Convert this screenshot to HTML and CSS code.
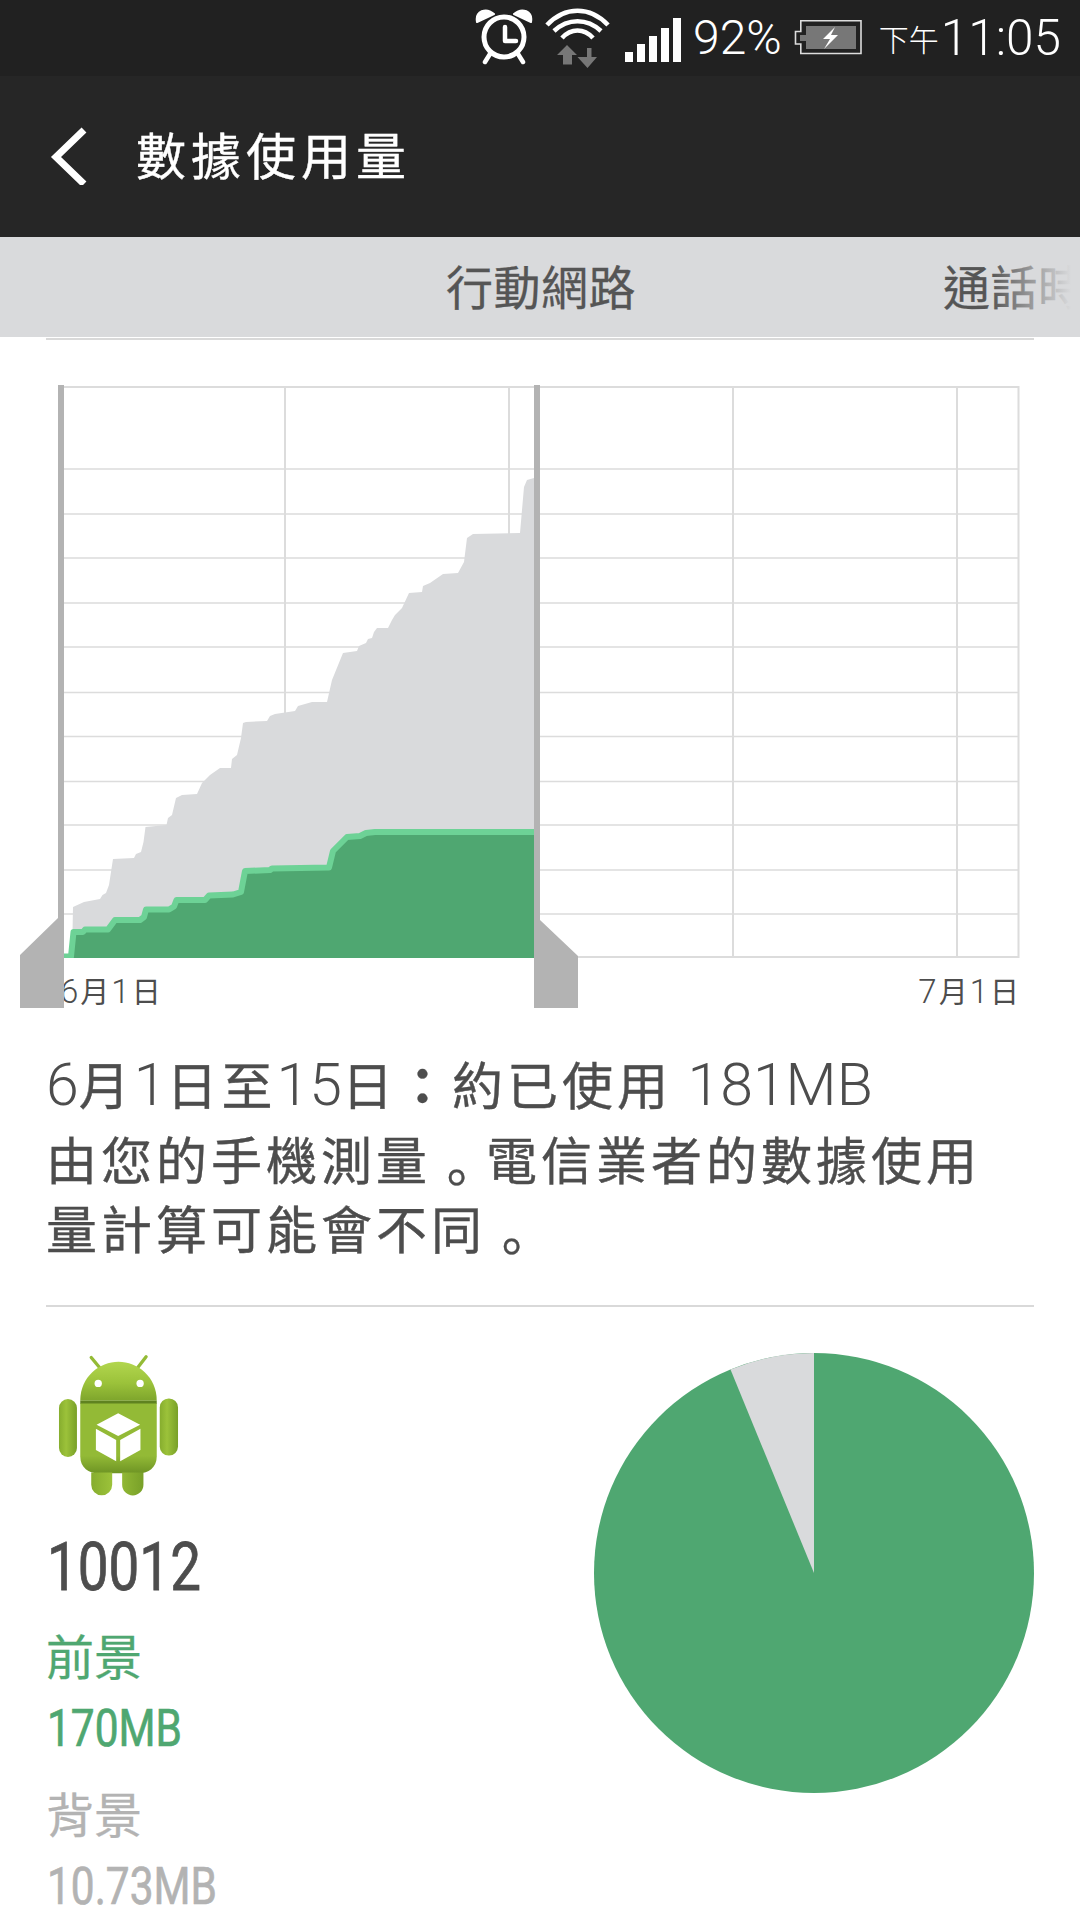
FILE: index.html
```html
<!DOCTYPE html>
<html lang="zh-Hant">
<head>
<meta charset="utf-8">
<title>數據使用量</title>
<link rel="stylesheet" href="styles.css">
</head>
<body>
<div class="status">
  <svg class="st-icons" viewBox="470 0 220 76">
    <g fill="none" stroke="#fff" stroke-width="5">
      <circle cx="504" cy="37" r="20"/>
      <path d="M505 27V41H516" stroke-width="4.500" stroke-linecap="round" stroke-linejoin="round"/>
      <path d="M490 54L485 62M518 54L523 62" stroke-width="4.500" stroke-linecap="round"/>
    </g>
    <path d="M477 22C475 11 486 7 494 14Z M531 22C533 11 522 7 514 14Z" fill="#fff" stroke="#fff" stroke-width="2" stroke-linejoin="round"/>
    <g fill="none" stroke="#fff" stroke-width="4.600">
      <path d="M547 25C565 6 590 6 608 25"/>
      <path d="M554 31C568 18 587 18 601 31"/>
      <path d="M562 38C571 28 584 28 593 38"/>
    </g>
    <path d="M567 45L557 55H563V64.500H572V55H577Z M587 48V57H577.500L587.500 68L597 57H591.500V48Z" fill="#777"/>
    <g fill="#fff">
      <rect x="625" y="52" width="8" height="10"/>
      <rect x="637" y="44" width="8" height="18"/>
      <rect x="649" y="36" width="8" height="26"/>
      <rect x="661" y="28" width="8" height="34"/>
      <rect x="673" y="18" width="8" height="44"/>
    </g>
  </svg>
  <span class="st-pct">92%</span>
  <svg class="st-batt" viewBox="790 0 80 76">
    <path d="M802.800 20.800H863V53.500H802.800V44H797.500V31.500H802.800Z" fill="none" stroke="#ddd" stroke-width="1.600"/>
    <path d="M808 26H858V49H808V41H802V35H808Z" fill="#777"/>
    <path d="M837 27L825 39H832L826 49L840 35H833Z" fill="#fff"/>
  </svg>
  <span class="st-ampm">下午</span>
  <span class="st-time">11:05</span>
</div>

<header class="appbar">
  <svg class="back" viewBox="0 0 44 64">
    <path d="M38 9L10 36L38 63" fill="none" stroke="#fff" stroke-width="7"/>
  </svg>
  <h1 class="title">數據使用量</h1>
</header>

<nav class="tabs">
  <span class="tab">行動網路</span>
  <span class="tab">通話時間</span>
  <span class="tab-fade"></span>
</nav>
<div class="rule rule-top"></div>

<section class="chart">
  <svg class="chart-art" viewBox="0 340 1080 680">
    <defs>
      <clipPath id="plot"><rect x="64" y="340" width="470" height="618"/></clipPath>
    </defs>
    <g stroke="#dcdcdc" stroke-width="1.500" fill="none">
      <path d="M64 469H1018M64 514H1018M64 558H1018M64 603H1018M64 647H1018M64 692.500H1018M64 736.500H1018M64 781.500H1018M64 825H1018M64 870H1018M64 914H1018"/>
      <path d="M285 387V957M509 387V957M733 387V957M957 387V957" stroke-width="2"/>
      <path d="M58 387H1018.500V957H540" stroke-width="2"/>
      <path d="M64 957H534" stroke-width="2"/>
    </g>
    <path fill="#d9dadc" d="M72 958L73 907L84 902L100 899L102.500 895L106 893L109 885L113 859L134 858L136 854L141 852L143.500 842L145.500 827L166.500 825L168 818L172 815L176 798L182 795L197 794L202 783L210 775L220 768L231 768L232 759L237 755L241 738L243 723L246 722L267 721L270 716L275 714L295 711L298 706L312 702L327 702L332 680L343 653L357 651L359 646L366 643L368 639L372 638L374 632L377 628L388 628L392 620L395 615L402 608L409 593L422 592L423 586L430 583L443 574L458 573L464 562L467 538L473 534L520 533L524 487L527 480L534 478V958Z"/>
    <g clip-path="url(#plot)">
      <path fill="#4fa771" d="M64 958V956.500H71L73.500 932H83L85 929.500H108L115 920H140L144 917L146 909.500H169L174 906.500L176.500 900H205L209 895.500L233 894.500L241 892L245 871L270 870L272 868.500L329 867.500L333 851L347 837L360 836L366 833L375 832H534V958Z"/>
      <path fill="none" stroke="#6dd296" stroke-width="6" stroke-linejoin="round" d="M64 956.500H71L73.500 932H83L85 929.500H108L115 920H140L144 917L146 909.500H169L174 906.500L176.500 900H205L209 895.500L233 894.500L241 892L245 871L270 870L272 868.500L329 867.500L333 851L347 837L360 836L366 833L375 832H534"/>
    </g>
    <path fill="#b3b3b3" d="M58 385H64V1008H20V955L58 918Z"/>
    <path fill="#b3b3b3" d="M534 385H540V920L578 956V1008H534Z"/>
  </svg>
  <div class="axis">
    <span class="axis-label"><span class="axis-num">6</span>月<span class="axis-num">1</span>日</span>
    <span class="axis-label"><span class="axis-num">7</span>月<span class="axis-num">1</span>日</span>
  </div>
</section>

<section class="summary">
  <p class="summary-head"><span class="light">6</span>月<span class="light">1</span>日至<span class="light">15</span>日<span class="colon">：</span>約已使用 <span class="light">181MB</span></p>
  <p class="summary-body">由您的手機測量<span class="stop">。</span>電信業者的數據使用量計算可能會不同<span class="stop">。</span></p>
</section>
<div class="rule rule-mid"></div>

<section class="detail">
  <div class="info">
    <svg class="android" viewBox="100 60 400 450">
      <defs>
        <linearGradient id="ga" x1="0" y1="0" x2="1" y2="0">
          <stop offset="0" stop-color="#86ad2e"/>
          <stop offset=".4" stop-color="#9cc23a"/>
          <stop offset="1" stop-color="#78a028"/>
        </linearGradient>
        <linearGradient id="gb" x1="0" y1="0" x2="0" y2="1">
          <stop offset="0" stop-color="#b2d64e"/>
          <stop offset=".55" stop-color="#9bc23a"/>
          <stop offset="1" stop-color="#7ea52c"/>
        </linearGradient>
        <linearGradient id="gc" x1="0" y1="0" x2="0" y2="1">
          <stop offset="0" stop-color="#93ba36"/>
          <stop offset=".75" stop-color="#93ba36"/>
          <stop offset="1" stop-color="#6e9424"/>
        </linearGradient>
      </defs>
      <path d="M215 82L240 112M380 80L355 112" stroke="#94bb36" stroke-width="10" stroke-linecap="round"/>
      <path d="M182 212C182 140 240 95 297 95C354 95 412 140 412 212Z" fill="url(#gb)"/>
      <circle cx="236" cy="160" r="11" fill="#fff"/>
      <circle cx="362" cy="160" r="11" fill="#fff"/>
      <path d="M182 212H412V222H182Z" fill="#5f8220"/>
      <path d="M182 220H412V380C412 415 385 430 360 430H234C209 430 182 415 182 380Z" fill="url(#gc)"/>
      <rect x="118" y="207" width="54" height="174" rx="27" fill="url(#ga)"/>
      <rect x="421" y="205" width="55" height="172" rx="27" fill="url(#ga)"/>
      <path d="M215 428H278V465A31 31 0 0 1 215 465Z M308 428H372V465A32 32 0 0 1 308 465Z" fill="url(#ga)"/>
      <path d="M296 250L362 284L296 318L231 284Z M229 296L290 330V394L229 360Z M302 330L363 296V360L302 394Z" fill="#fff"/>
    </svg>
    <div class="app-name"><span class="cond">10012</span></div>
    <div class="stat-label fg">前景</div>
    <div class="stat-value fg"><span class="cond cond-sm">170MB</span></div>
    <div class="stat-label bg bg-label">背景</div>
    <div class="stat-value bg"><span class="cond cond-sm">10.73MB</span></div>
  </div>
  <svg class="pie" viewBox="0 0 440 440">
    <circle cx="220" cy="220" r="220" fill="#4fa771"/>
    <path d="M220 220V0A220 220 0 0 0 136.500 16.500Z" fill="#d9dadc"/>
  </svg>
</section>
</body>
</html>
```
FILE: styles.css
```css
* { box-sizing: border-box; margin: 0; padding: 0; }
html, body { width: 1080px; height: 1920px; overflow: hidden; background: #fff; }
body { font-family: "Noto Sans CJK TC", "Noto Sans", sans-serif; color: #4d4d4d; }

.status {
  height: 76px;
  background: #212121;
  color: #fff;
  display: flex;
  align-items: center;
  padding-left: 470px;
  font-family: Roboto, "Noto Sans CJK TC", sans-serif;
  font-weight: 300;
  white-space: nowrap;
}
.st-icons { width: 220px; height: 76px; flex: none; }
.st-pct { font-size: 48px; line-height: 76px; margin-left: 3px; }
.st-batt { width: 80px; height: 76px; flex: none; margin-left: 6px; }
.st-ampm { font-size: 30px; line-height: 76px; margin-left: 11px; font-family: "Noto Sans CJK TC", sans-serif; }
.st-time { font-size: 49.5px; line-height: 76px; margin-left: 2px; }

.appbar {
  height: 161px;
  background: #262626;
  display: flex;
  align-items: center;
  padding-left: 46px;
  padding-bottom: 8px;
}
.back { width: 44px; height: 64px; flex: none; }
.title {
  font-size: 50px;
  font-weight: 400;
  letter-spacing: 5px;
  color: #fff;
  line-height: 60px;
  margin-left: 46px;
  -webkit-text-stroke: .4px #fff;
}

.tabs {
  position: relative;
  height: 100px;
  background: #d9dadc;
  display: flex;
  align-items: center;
  gap: 307px;
  padding: 0 0 4px 446px;
  overflow: hidden;
  white-space: nowrap;
}
.tab { font-size: 47px; letter-spacing: .5px; color: #555; line-height: 60px; flex: none; -webkit-text-stroke: .3px #555; }
.tab-fade {
  position: absolute;
  top: 0;
  right: 0;
  bottom: 0;
  width: 90px;
  background: linear-gradient(to right, rgba(217, 218, 220, 0), #d9dadc 90%);
}

.rule { height: 2px; background: #d9d9d9; margin: 0 46px; }
.rule-top { margin-top: 1px; }
.rule-mid { margin-top: 42.5px; }

.chart { position: relative; height: 672px; padding-top: 630px; }
.chart-art { position: absolute; left: 0; top: 0; width: 1080px; height: 680px; }
.axis { display: flex; justify-content: space-between; padding: 0 59px 0 60px; }
.axis-label { font-size: 29px; line-height: 40px; letter-spacing: 2px; color: #4d4d4d; }
.axis-num { font-family: Roboto, sans-serif; font-weight: 300; font-size: 33px; }

.summary { margin-top: 37px; padding: 0 46px; }
.summary-head { font-size: 51px; letter-spacing: 4px; line-height: 69px; white-space: nowrap; -webkit-text-stroke: .4px #4d4d4d; }
.light { font-family: Roboto, sans-serif; font-weight: 300; font-size: 59px; letter-spacing: 0; -webkit-text-stroke: 0; }
.colon { font-weight: 700; }
.summary-body { font-size: 51px; letter-spacing: 4px; line-height: 69px; margin-top: 5px; -webkit-text-stroke: .4px #4d4d4d; }
.stop { line-height: 0; vertical-align: -17px; }

.detail { display: flex; justify-content: space-between; align-items: flex-start; padding: 0 46px; }
.info { display: flex; flex-direction: column; align-items: flex-start; }
.android { width: 133px; height: 150px; margin: 43.5px 0 0 7px; display: block; }
.app-name {
  font-family: Roboto, sans-serif;
  font-size: 66px;
  line-height: 80px;
  margin: 28px 0 0 1px;
  color: #4d4d4d;
  -webkit-text-stroke: .8px #4d4d4d;
}
.cond { display: inline-block; transform: scaleX(.83); transform-origin: left center; white-space: nowrap; }
.cond-sm { transform: scaleX(.815); }
.stat-label { font-size: 48px; line-height: 60px; margin-top: 15.5px; -webkit-text-stroke: .3px currentColor; }
.stat-value { font-family: Roboto, sans-serif; font-size: 52px; line-height: 60px; margin: 15px 0 0 1px; -webkit-text-stroke: .7px currentColor; }
.bg-label { margin-top: 23.5px; }
.fg { color: #4fa771; }
.bg { color: #b3b3b3; }
.pie { width: 440px; height: 440px; margin-top: 46.5px; flex: none; }
```
